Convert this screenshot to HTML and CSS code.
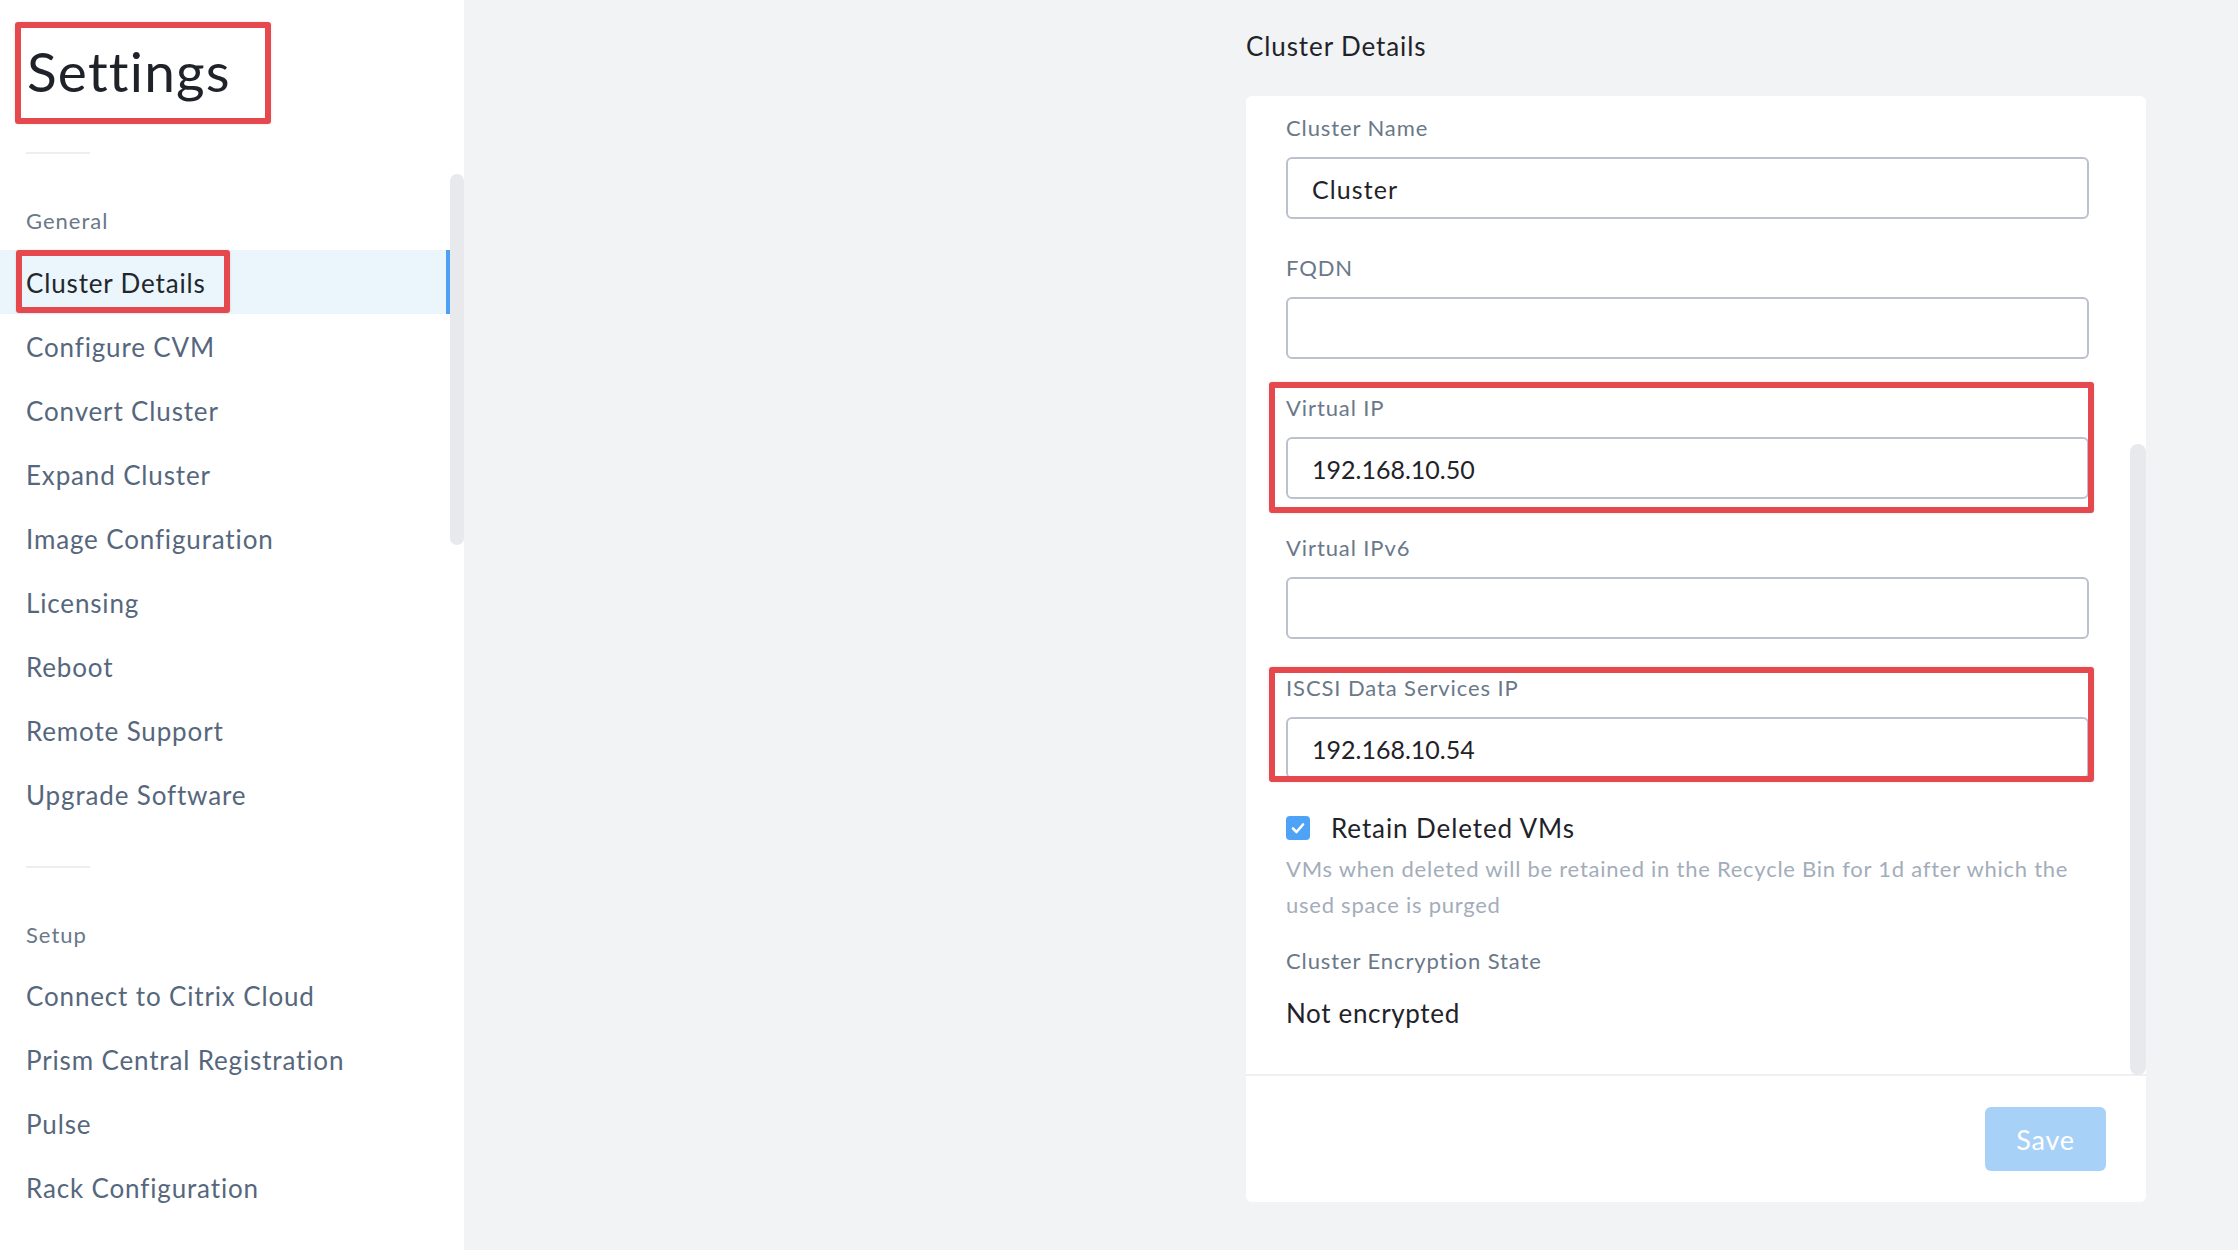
FILE: index.html
```html
<!DOCTYPE html>
<html>
<head>
<meta charset="utf-8">
<title>Settings</title>
<link rel="stylesheet" href="styles.css">
</head>
<body>
<div class="app">
  <aside class="sidebar">
    <div class="title-wrap">
      <h1 class="title">Settings</h1>
      <span class="annot annot-title"></span>
    </div>
    <div class="divider"></div>
    <div class="nav">
      <div class="thumb thumb-side"></div>
      <div class="group-label">General</div>
      <div class="item active"><span class="item-text">Cluster Details</span><span class="annot annot-item"></span></div>
      <div class="item">Configure CVM</div>
      <div class="item">Convert Cluster</div>
      <div class="item">Expand Cluster</div>
      <div class="item">Image Configuration</div>
      <div class="item">Licensing</div>
      <div class="item">Reboot</div>
      <div class="item">Remote Support</div>
      <div class="item">Upgrade Software</div>
      <div class="divider divider-2"></div>
      <div class="group-label">Setup</div>
      <div class="item">Connect to Citrix Cloud</div>
      <div class="item">Prism Central Registration</div>
      <div class="item">Pulse</div>
      <div class="item">Rack Configuration</div>
    </div>
  </aside>
  <main class="main">
    <section class="content">
      <h2 class="heading">Cluster Details</h2>
      <div class="card">
        <div class="card-body">
          <div class="thumb thumb-card"></div>
          <div class="field">
            <div class="label">Cluster Name</div>
            <div class="input">Cluster</div>
          </div>
          <div class="field">
            <div class="label">FQDN</div>
            <div class="input"></div>
          </div>
          <div class="field">
            <div class="label">Virtual IP</div>
            <div class="input input-num">192.168.10.50</div>
            <span class="annot annot-vip"></span>
          </div>
          <div class="field">
            <div class="label">Virtual IPv6</div>
            <div class="input"></div>
          </div>
          <div class="field">
            <div class="label">ISCSI Data Services IP</div>
            <div class="input input-num">192.168.10.54</div>
            <span class="annot annot-iscsi"></span>
          </div>
          <div class="check-row">
            <span class="checkbox"><svg width="24" height="24" viewBox="0 0 24 24"><polyline points="7,12.5 10.5,16 17,8.5" fill="none" stroke="#ffffff" stroke-width="2.6" stroke-linecap="round" stroke-linejoin="round"/></svg></span>
            <span class="check-label">Retain Deleted VMs</span>
          </div>
          <p class="desc">VMs when deleted will be retained in the Recycle Bin for 1d after which the<br>used space is purged</p>
          <div class="label enc-label">Cluster Encryption State</div>
          <div class="enc-value">Not encrypted</div>
        </div>
        <div class="card-footer">
          <button class="save">Save</button>
        </div>
      </div>
    </section>
  </main>
</div>
</body>
</html>
```
FILE: styles.css
```css
* { box-sizing: border-box; }
html, body { margin: 0; padding: 0; }
body {
  font-family: Lato, "Liberation Sans", sans-serif;
  background: #f2f3f5;
  width: 2238px;
  height: 1250px;
  overflow: hidden;
}
.app {
  display: flex;
  height: 1250px;
}
.sidebar {
  width: 464px;
  flex: none;
  background: #ffffff;
  position: relative;
  padding-top: 38px;
}
.title-wrap {
  position: relative;
  padding-left: 27px;
}
.title {
  margin: 0;
  font-size: 55px;
  line-height: 66px;
  font-weight: 400;
  color: #1f2329;
  letter-spacing: 1.2px;
}
.annot {
  position: absolute;
  border: 6px solid #e5484d;
  border-radius: 3px;
  box-shadow: 0 0 3px rgba(0,0,0,0.12);
  pointer-events: none;
}
.annot-title {
  left: 15px;
  top: -16px;
  width: 256px;
  height: 102px;
}
.divider {
  width: 64px;
  height: 2px;
  background: #eceef0;
  margin: 48px 0 0 26px;
}
.nav {
  position: relative;
  padding-top: 52px;
}
.thumb {
  position: absolute;
  background: #e8e9ed;
  border-radius: 8px;
}
.thumb-side {
  left: 450px;
  width: 14px;
  top: 20px;
  height: 371px;
}
.group-label {
  padding-left: 26px;
  font-size: 22px;
  line-height: 30px;
  color: #6a7889;
  letter-spacing: 1px;
  margin-bottom: 13.5px;
}
.item {
  position: relative;
  width: 450px;
  height: 64px;
  line-height: 66px;
  padding-left: 26px;
  font-size: 26px;
  letter-spacing: 0.85px;
  color: #56677d;
  white-space: nowrap;
}
.item.active {
  background: #eaf5fc;
  color: #22272c;
  border-right: 4px solid #4ea0f5;
}
.annot-item {
  left: 16px;
  top: 0;
  width: 214px;
  height: 63px;
}
.divider-2 {
  margin: 40px 0 52px 26px;
}
.main {
  flex: 1;
  display: flex;
  justify-content: flex-end;
  padding-right: 92px;
}
.content {
  width: 900px;
  padding-top: 29px;
}
.heading {
  margin: 0 0 33px 0;
  font-size: 26px;
  line-height: 34px;
  font-weight: 400;
  letter-spacing: 0.9px;
  color: #1f2329;
}
.card {
  background: #ffffff;
  border-radius: 6px;
  height: 1106px;
  display: flex;
  flex-direction: column;
}
.card-body {
  position: relative;
  height: 980px;
  padding: 16.5px 57px 0 40px;
  border-bottom: 2px solid #eef0f2;
}
.thumb-card {
  right: 0;
  width: 16px;
  top: 348px;
  height: 631px;
}
.field {
  position: relative;
  margin-bottom: 34px;
}
.label {
  font-size: 22px;
  line-height: 30px;
  letter-spacing: 0.9px;
  color: #6a7889;
  margin-bottom: 14px;
}
.input {
  height: 62px;
  border: 2px solid #bcc2cd;
  border-radius: 6px;
  padding-left: 24px;
  font-size: 25px;
  line-height: 60px;
  letter-spacing: 1.1px;
  color: #1f2329;
}
.input-num {
  letter-spacing: 0;
}
.annot-vip {
  left: -17px;
  top: -10.5px;
  right: -5px;
  bottom: -14px;
}
.annot-iscsi {
  left: -17px;
  top: -5.5px;
  right: -5px;
  bottom: -3px;
}
.check-row {
  display: flex;
  align-items: center;
  height: 30px;
  margin-top: 8px;
}
.checkbox {
  width: 24px;
  height: 24px;
  border-radius: 4px;
  background: #4fa3f7;
  display: flex;
}
.check-label {
  margin-left: 21px;
  font-size: 26px;
  line-height: 30px;
  letter-spacing: 0.9px;
  color: #1f2329;
}
.desc {
  margin: 8px 0 0 0;
  font-size: 22px;
  line-height: 36px;
  letter-spacing: 0.75px;
  color: #a3adba;
  white-space: nowrap;
}
.enc-label {
  margin: 23px 0 0 0;
}
.enc-value {
  margin-top: 20.5px;
  font-size: 26px;
  line-height: 34px;
  letter-spacing: 0.65px;
  color: #1f2329;
}
.card-footer {
  flex: 1;
  display: flex;
  justify-content: flex-end;
  align-items: center;
  padding-right: 40px;
}
.save {
  width: 121px;
  height: 64px;
  border: none;
  border-radius: 6px;
  background: #a8d1f7;
  color: #ffffff;
  font-family: Lato, "Liberation Sans", sans-serif;
  font-size: 27px;
  letter-spacing: 0.8px;
  padding: 0;
}
```
